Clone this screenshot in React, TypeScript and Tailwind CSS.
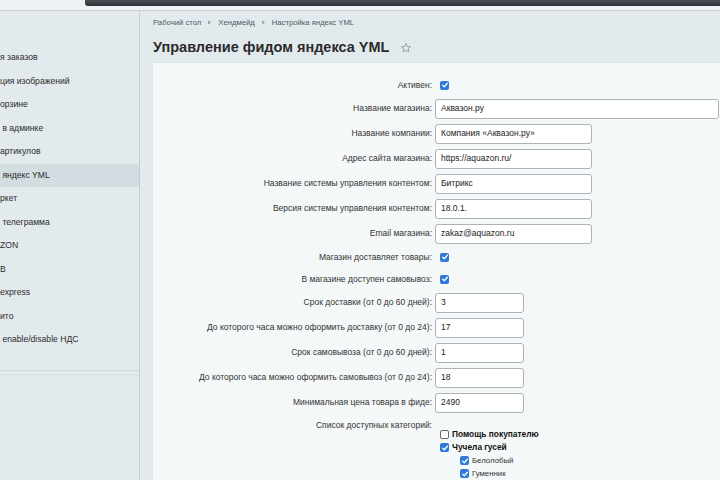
import React from "react";

const sidebarItems = [
    "я заказов",
    "ция изображений",
    "орзине",
    " в админке",
    "артикулов",
    " яндекс YML",
    "ркет",
    " телеграмма",
    "ZON",
    "B",
    "express",
    "ито",
    " enable/disable НДС",
];

type Row =
    | { kind: "input"; label: string; value: string; width: string }
    | { kind: "check"; label: string };

const rows: Row[] = [
    { kind: "check", label: "Активен:" },
    { kind: "input", label: "Название магазина:", value: "Аквазон.ру", width: "w-[284px]" },
    { kind: "input", label: "Название компании:", value: "Компания «Аквазон.ру»", width: "w-[157px]" },
    { kind: "input", label: "Адрес сайта магазина:", value: "https://aquazon.ru/", width: "w-[157px]" },
    { kind: "input", label: "Название системы управления контентом:", value: "Битрикс", width: "w-[157px]" },
    { kind: "input", label: "Версия системы управления контентом:", value: "18.0.1.", width: "w-[157px]" },
    { kind: "input", label: "Email магазина:", value: "zakaz@aquazon.ru", width: "w-[157px]" },
    { kind: "check", label: "Магазин доставляет товары:" },
    { kind: "check", label: "В магазине доступен самовывоз:" },
    { kind: "input", label: "Срок доставки (от 0 до 60 дней):", value: "3", width: "w-[89px]" },
    { kind: "input", label: "До которого часа можно оформить доставку (от 0 до 24):", value: "17", width: "w-[89px]" },
    { kind: "input", label: "Срок самовывоза (от 0 до 60 дней):", value: "1", width: "w-[89px]" },
    { kind: "input", label: "До которого часа можно оформить самовывоз (от 0 до 24):", value: "18", width: "w-[89px]" },
    { kind: "input", label: "Минимальная цена товара в фиде:", value: "2490", width: "w-[89px]" },
];

function Check({ checked = true }: { checked?: boolean }) {
    if (!checked) {
        return <span className="inline-block w-[9px] h-[9px] rounded-[2px] border border-[#6b6b6b] bg-white shrink-0" />;
    }
    return (
        <span className="inline-flex items-center justify-center w-[9px] h-[9px] rounded-[2px] bg-[#2f7ad6] shrink-0">
            <svg viewBox="0 0 10 10" className="w-[8px] h-[8px]">
                <path d="M2 5.2 L4.1 7.2 L8 2.8" fill="none" stroke="white" strokeWidth="1.6" strokeLinecap="round" strokeLinejoin="round" />
            </svg>
        </span>
    );
}

function Crumb() {
    return (
        <svg viewBox="0 0 4 6" className="w-[3px] h-[5px] mx-[3px]">
            <path d="M0 0 L4 3 L0 6 Z" fill="#9aa4aa" />
        </svg>
    );
}

export default function App() {
    return (
        <div className="w-[720px] h-[480px] overflow-hidden bg-[#e3eaed] text-[#222] font-['Liberation_Sans',Arial,sans-serif] flex flex-col">
            <div className="h-[11px] flex border-b border-[#c8d0d4] bg-[#eef2f4]">
                <div className="w-[85px]" />
                <div className="flex-1 h-[6px] bg-gradient-to-b from-[#4b5058] to-[#2c3036] rounded-bl-[3px]" />
            </div>
            <div className="flex flex-1 min-h-0">
                <aside className="w-[140px] border-r border-[#c4cdd2] bg-[#e3eaed] pt-[35px] shrink-0">
                    {sidebarItems.map((item) => (
                        <div
                            key={item}
                            className={`h-[23.5px] flex items-center text-[8.6px] text-[#2a2a2a] whitespace-pre ${
                                item === " яндекс YML" ? "bg-[#d3dce0]" : ""
                            }`}
                        >
                            {item}
                        </div>
                    ))}
                    <div className="mt-[18px] border-t border-[#cfd8dc] shadow-[0_1px_2px_rgba(0,0,0,0.06)] h-[4px]" />
                </aside>
                <main className="flex-1 min-w-0 pl-[13px] flex flex-col">
                    <div className="h-[22px] mt-[1px] flex items-center gap-[4px] text-[7.7px] text-[#4b5a66]">
                        <span>Рабочий стол</span>
                        <Crumb />
                        <span>Хендмейд</span>
                        <Crumb />
                        <span>Настройка яндекс YML</span>
                    </div>
                    <div className="h-[31px] flex items-center gap-[11px]">
                        <h1 className="text-[14.5px] font-bold text-[#2b2b2b]">Управление фидом яндекса YML</h1>
                        <svg viewBox="0 0 24 24" className="w-[12px] h-[12px] mt-[2px]">
                            <path
                                d="M12 3 L14.6 9 L21 9.5 L16.1 13.6 L17.6 20 L12 16.6 L6.4 20 L7.9 13.6 L3 9.5 L9.4 9 Z"
                                fill="none"
                                stroke="#98a2a8"
                                strokeWidth="2"
                                strokeLinejoin="round"
                            />
                        </svg>
                    </div>
                    <div className="flex-1 bg-[#f5f8f9] border-t border-[#dfe6e9] pt-[11px] text-[8.5px] text-[#333]">
                        {rows.map((row) => (
                            <div
                                key={row.label}
                                className={`flex items-center ${row.kind === "check" ? "h-[22px]" : "h-[25px]"}`}
                            >
                                <div className="w-[282px] text-right pr-[3px] whitespace-nowrap">{row.label}</div>
                                {row.kind === "check" ? (
                                    <div className="pl-[5px] flex items-center">
                                        <Check />
                                    </div>
                                ) : (
                                    <div
                                        className={`${row.width} h-[20px] bg-white border border-[#a9b3b8] rounded-[3px] flex items-center px-[5px] text-[8.5px] text-[#222] whitespace-nowrap`}
                                    >
                                        {row.value}
                                    </div>
                                )}
                            </div>
                        ))}
                        <div className="flex">
                            <div className="w-[282px] text-right pr-[3px] pt-[4px] whitespace-nowrap">
                                Список доступных категорий:
                            </div>
                            <div className="pl-[5px] pt-[13px] flex flex-col">
                                <div className="h-[13px] flex items-center gap-[3px] text-[8.4px] font-bold text-[#111]">
                                    <Check checked={false} />
                                    <span>Помощь покупателю</span>
                                </div>
                                <div className="h-[13px] flex items-center gap-[3px] text-[8.4px] font-bold text-[#111]">
                                    <Check />
                                    <span>Чучела гусей</span>
                                </div>
                                <div className="h-[13px] flex items-center gap-[3px] pl-[20px] text-[7.8px]">
                                    <Check />
                                    <span>Белолобый</span>
                                </div>
                                <div className="h-[13px] flex items-center gap-[3px] pl-[20px] text-[7.8px]">
                                    <Check />
                                    <span>Гуменник</span>
                                </div>
                            </div>
                        </div>
                    </div>
                </main>
            </div>
        </div>
    );
}
